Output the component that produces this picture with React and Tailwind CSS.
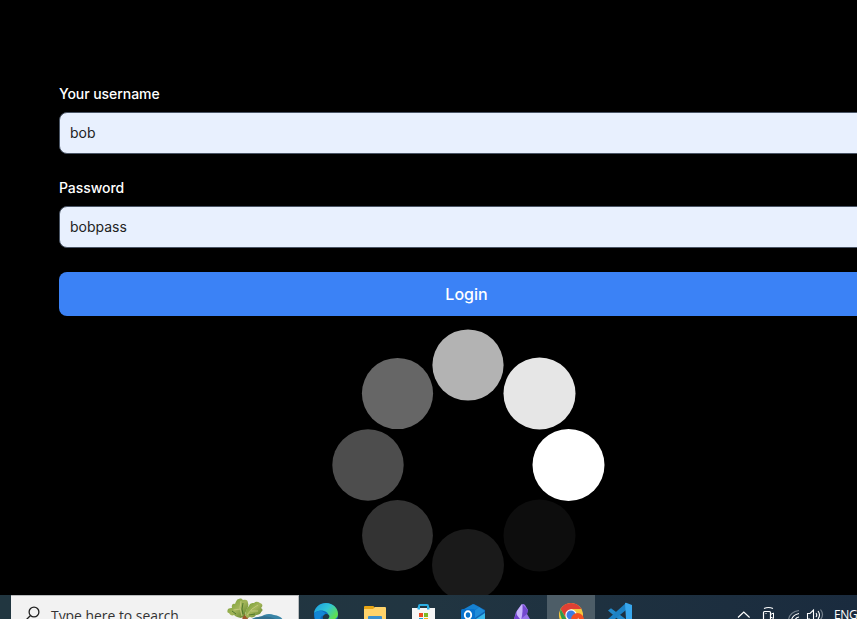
import React from "react";

const dots = [
  { x: 136, y: 36, r: 35.6, fill: "#b3b3b3" },
  { x: 207.5, y: 64.5, r: 36, fill: "#e6e6e6" },
  { x: 236.5, y: 136, r: 36, fill: "#ffffff" },
  { x: 207.5, y: 206.5, r: 36, fill: "#0d0d0d" },
  { x: 136, y: 236, r: 36, fill: "#1a1a1a" },
  { x: 65.5, y: 206.5, r: 35.4, fill: "#333333" },
  { x: 36, y: 136, r: 35.7, fill: "#4d4d4d" },
  { x: 65.5, y: 64.5, r: 35.6, fill: "#666666" },
];

function Field({ label, value }) {
  return (
    <label className="block">
      <span className="block text-sm font-medium leading-5 tracking-[-0.06px] text-white">{label}</span>
      <span className="mt-2 flex h-[42px] items-center rounded-lg border border-gray-600 bg-[#e8f0fe] px-2.5 text-sm text-[#222222]">
        {value}
      </span>
    </label>
  );
}

function Spinner() {
  return (
    <svg className="block h-[272px] w-[273px] shrink-0" viewBox="0 0 273 272">
      {dots.map((d) => (
        <circle key={d.fill} cx={d.x} cy={d.y} r={d.r} fill={d.fill} />
      ))}
    </svg>
  );
}

function Slot({ active, children }) {
  return (
    <div className={active ? "h-6 w-12 shrink-0 bg-[#4d5d67]" : "h-6 w-12 shrink-0"}>
      <svg className="block h-6 w-12" viewBox="0 0 48 24">{children}</svg>
    </div>
  );
}

function Plant() {
  return (
    <svg className="ml-auto block h-6 w-[76px] shrink-0" viewBox="0 0 76 24">
      <defs>
        <linearGradient id="leaf" x1="0" y1="0" x2="1" y2="1">
          <stop offset="0" stopColor="#6c9a2e" />
          <stop offset=".5" stopColor="#a3b559" />
          <stop offset="1" stopColor="#557c25" />
        </linearGradient>
      </defs>
      <path d="M29 24q2-3 7-3 3 0 6-2 5-2 10 0 7 1 9 5z" fill="#3984a6" />
      <path d="M33 22q8-3 15-1l8 3h-25z" fill="#326f8e" />
      <path d="m20.500 24-.5-10h2l1.500 6 5-6 1.500 1-5 9z" fill="#9c562c" />
      <path d="M19 22c-3-1-5-1-7-3-2 1-4 0-5-2-2 0-2-2-1-4 1-1 3-1 4-1-1-3 1-5 3-4 1-3 2-5 4-5 2-1 3 0 4 1 3-1 5 0 5 3 1 2 0 4-1 6l-3 7z" fill="url(#leaf)" />
      <path d="M23 19c1-4 1-6 4-9 1-3 3-3 5-3 2-2 4-1 6 0 3 1 3 3 1 5 2 1 2 3 0 4 0 2-3 3-5 3-1 2-4 3-6 2l-3 1z" fill="url(#leaf)" />
      <path d="m20 20-2-8 1-7M18.500 13l-7 1M25 19l5-6 6-4M29 15l7 0" fill="none" stroke="#c9ce83" strokeWidth=".8" />
      <path d="m21 18-1-5 1-6M14 18l-4-3M27 19l6-1" fill="none" stroke="#48722a" strokeWidth=".9" />
    </svg>
  );
}

function Taskbar() {
  return (
    <footer className="flex h-6 shrink-0 overflow-hidden bg-linear-to-r from-[#213640] via-[#213541] to-[#1a2b3e]">
      <div className="ml-[11px] flex h-6 w-72 shrink-0 overflow-hidden border-r border-t border-[#b9bcbe] bg-[#f2f2f2]">
        <svg className="ml-[15px] block h-6 w-4 shrink-0" viewBox="0 0 16 24" fill="none" stroke="#202020" strokeWidth="1.3">
          <circle cx="8" cy="16" r="4.9" />
          <path d="m4.5 19.5-5 5" />
        </svg>
        <span className="ml-[9px] mt-[8px] whitespace-nowrap font-['Open_Sans',sans-serif] text-[13.9px] leading-6 text-[#333333]">
          Type here to search
        </span>
        <Plant />
      </div>
      <div className="ml-[3px] flex gap-px">
        <Slot>
          <defs>
            <linearGradient id="edge" x1="0" y1="0" x2="1" y2=".6">
              <stop offset="0" stopColor="#1a9be0" />
              <stop offset=".55" stopColor="#31c5d6" />
              <stop offset="1" stopColor="#60e04f" />
            </linearGradient>
          </defs>
          <circle cx="24" cy="20" r="12" fill="#0d68bd" />
          <path d="M12 18c1-6 6-10 12-10 7 0 12 5 12 11 0 3-2 5-5 6h-6c3-3 2-8-3-9-4-1-7 0-10 2z" fill="url(#edge)" />
          <path d="M12.2 18.5c4-5 12-3 12 3l-3-1c-2 0-3 2-3 5h-5z" fill="#1287d5" />
          <path d="M21 24c-1-3 1-5 4-5 3 1 3 3 1 5z" fill="#203944" />
        </Slot>
        <Slot>
          <path d="M13 12q0-1 1-1h8q1 0 2 2v2h-11z" fill="#e7a514" />
          <path d="M13 14h9l2-2h10q1 0 1 1v11h-22z" fill="#ffd36a" />
          <path d="M17 24v-2q0-1 1-1h12q1 0 1 1v2z" fill="#398fce" />
        </Slot>
        <Slot>
          <path d="M19 14v-3q0-1 1-1h7q1 0 1 1v3" fill="none" stroke="#2caee3" strokeWidth="2" />
          <path d="M12 13h23v11h-23z" fill="#f6f6f6" />
          <path d="M17.5 12h2.5v2.500h-2.500zM27 12h2.500v2.500h-2.500z" fill="#2caee3" />
          <path d="M19 18h4v4h-4z" fill="#ed4c24" />
          <path d="M24 18h4v4h-4z" fill="#7eb927" />
          <path d="M24 23h4v1h-4z" fill="#fbb514" />
          <path d="M19 23h4v1h-4z" fill="#209fda" />
        </Slot>
        <Slot>
          <path d="m15 15 10-6 11 6v9h-21z" fill="#1066b5" />
          <path d="m15 14 9-5 6 3-8 6z" fill="#1682d2" />
          <path d="m24 17 6-5 6 4-10 7z" fill="#1e8cd9" />
          <path d="m27 24 9-6v6z" fill="#38b9eb" />
          <rect x="12" y="14" width="14" height="12" rx="1.500" fill="#0873ce" />
          <ellipse cx="19" cy="20" rx="3.200" ry="3.700" fill="none" stroke="#fff" strokeWidth="1.900" />
        </Slot>
        <Slot>
          <path d="m18 17 5-7q2-2 4 0l3 5-1 4 3 5h-16z" fill="#9874e8" />
          <path d="m19 16 5-7 1 8-2 7h-4z" fill="#c8b4fb" />
          <path d="m25 10 5 5-1 4-5 4z" fill="#7448cf" />
          <path d="m18 19 4 5h-6z" fill="#7041ce" />
        </Slot>
        <Slot active>
          <circle cx="24" cy="20" r="12" fill="#f7c83d" />
          <path d="M13.600 14a12 12 0 0 1 20.800 0h-10.400l-5 9z" fill="#df4034" />
          <path d="m13.600 14 5.200 9 3 6a12 12 0 0 1-8.200-15z" fill="#2d9950" />
          <circle cx="24" cy="20" r="5.700" fill="#fff" />
          <circle cx="24" cy="20" r="4.500" fill="#3d7de3" />
          <circle cx="30.500" cy="24.500" r="6.500" fill="#f25022" />
          <path d="m30.500 24 1-1.500v1.500z" fill="#fff" />
        </Slot>
        <Slot>
          <path d="m12 15.500 3-2.200 16 11.700h-8z" fill="#2389ca" />
          <path d="M12 24 30 8v7l-11 9z" fill="#1d82c5" />
          <path d="m29 8 1-.3 6 2.300v14h-6z" fill="#38a7ed" />
        </Slot>
      </div>
      <div className="ml-auto flex h-6 shrink-0 items-start text-white">
        <svg className="block h-6 w-[97px]" viewBox="737 595 97 24" fill="none" stroke="currentColor" strokeWidth="1.200">
          <path d="m738 617.500 5.800-5.500 5.800 5.500" />
          <path d="M764 608.500q4.500-2 9 0" />
          <rect x="763.500" y="611.500" width="7" height="8.500" rx="1" />
          <path d="m770.500 614.500 3-1.500v5.500l-3-1.500M765.500 613.500h1" strokeWidth="1" />
          <path d="M788.500 620q1-8 10.500-9.500" stroke="#75818d" />
          <path d="M791.500 620q1-5 7.500-6.500M795 620q1-2.500 4-3" strokeWidth="1.100" />
          <path d="M813.500 619v-9l-3.500 3.500h-2.500v5.500h2.500M816 613q1.500 2 0 4M818 611q3 4 0 8" strokeWidth="1.100" />
          <path d="M820.500 609.500q4 5 0 10" stroke="#75818d" />
        </svg>
        <span className="mt-[10px] w-[23px] whitespace-nowrap font-['Open_Sans',sans-serif] text-[12px] leading-5 tracking-[-0.3px]">ENG</span>
      </div>
    </footer>
  );
}

export default function App() {
  return (
    <div className="flex h-[619px] w-[857px] flex-col overflow-hidden bg-black font-['Inter',sans-serif]">
      <main className="min-h-0 flex-1 overflow-hidden pl-[59px] pt-[84px]">
        <div className="flex w-[815px] flex-col">
          <div className="flex flex-col gap-6">
            <Field label="Your username" value="bob" />
            <Field label="Password" value="bobpass" />
            <button className="h-11 rounded-lg bg-[#3b82f6] text-base font-medium text-white">Login</button>
          </div>
          <div className="mt-[13px] flex justify-center pl-[3px]">
            <Spinner />
          </div>
        </div>
      </main>
      <Taskbar />
    </div>
  );
}
